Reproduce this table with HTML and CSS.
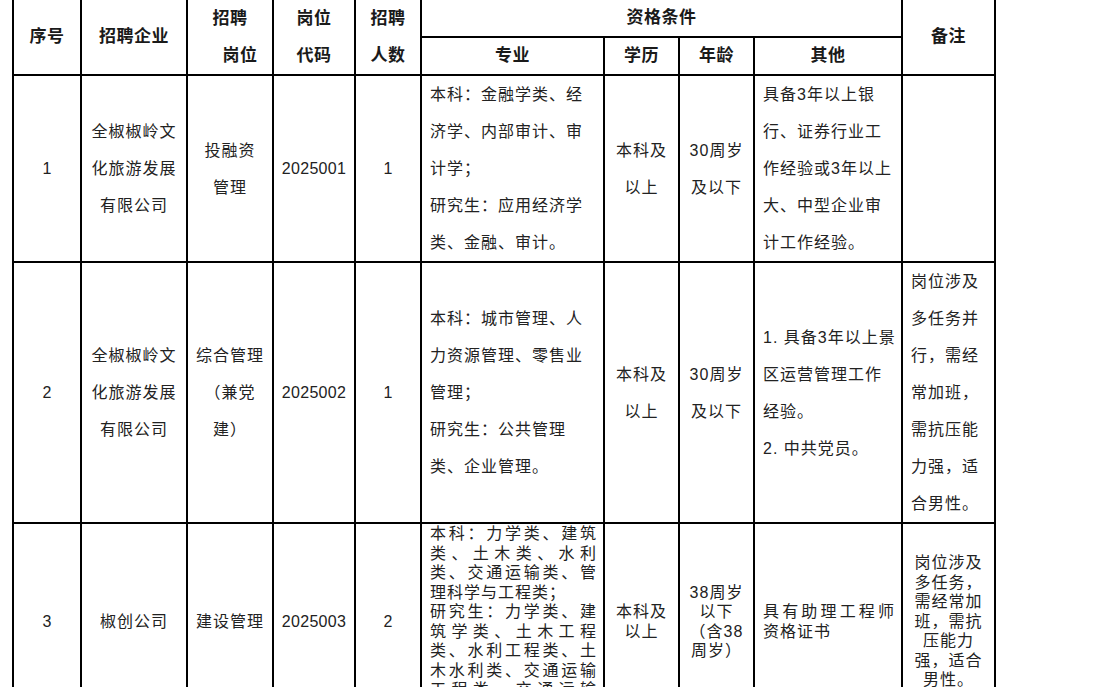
FILE: index.html
```html
<!DOCTYPE html>
<html lang="zh-CN">
<head>
<meta charset="utf-8">
<title>招聘岗位表</title>
<link rel="stylesheet" href="styles.css">
</head>
<body>
<table class="sheet">
  <colgroup>
    <col class="c-no">
    <col class="c-co">
    <col class="c-job">
    <col class="c-code">
    <col class="c-num">
    <col class="c-major">
    <col class="c-edu">
    <col class="c-age">
    <col class="c-other">
    <col class="c-note">
  </colgroup>
  <thead>
    <tr class="h1">
      <th rowspan="2">序号</th>
      <th rowspan="2">招聘企业</th>
      <th rowspan="2" class="two">招聘<br><span class="shift">岗位</span></th>
      <th rowspan="2" class="two">岗位<br>代码</th>
      <th rowspan="2" class="two">招聘<br>人数</th>
      <th colspan="4">资格条件</th>
      <th rowspan="2">备注</th>
    </tr>
    <tr class="h2">
      <th>专业</th>
      <th>学历</th>
      <th>年龄</th>
      <th>其他</th>
    </tr>
  </thead>
  <tbody>
    <tr>
      <td class="code">1</td>
      <td>全椒椒岭文<br>化旅游发展<br>有限公司</td>
      <td>投融资<br>管理</td>
      <td class="code">2025001</td>
      <td class="code">1</td>
      <td class="left">本科：金融学类、经<br>济学、内部审计、审<br>计学；<br>研究生：应用经济学<br>类、金融、审计。</td>
      <td>本科及<br>以上</td>
      <td>30周岁<br>及以下</td>
      <td class="left">具备3年以上银<br>行、证券行业工<br>作经验或3年以上<br>大、中型企业审<br>计工作经验。</td>
      <td></td>
    </tr>
    <tr>
      <td class="code">2</td>
      <td>全椒椒岭文<br>化旅游发展<br>有限公司</td>
      <td>综合管理<br>（兼党<br>建）</td>
      <td class="code">2025002</td>
      <td class="code">1</td>
      <td class="left">本科：城市管理、人<br>力资源管理、零售业<br>管理；<br>研究生：公共管理<br>类、企业管理。</td>
      <td>本科及<br>以上</td>
      <td>30周岁<br>及以下</td>
      <td class="left">1. 具备3年以上景<br>区运营管理工作<br>经验。<br>2. 中共党员。</td>
      <td class="left">岗位涉及<br>多任务并<br>行，需经<br>常加班，<br>需抗压能<br>力强，适<br>合男性。</td>
    </tr>
    <tr class="dense">
      <td class="code">3</td>
      <td>椒创公司</td>
      <td>建设管理</td>
      <td class="code">2025003</td>
      <td class="code">2</td>
      <td class="just">本科：力学类、建筑类、土木类、水利类、交通运输类、管理科学与工程类；<br>研究生：力学类、建筑学类、土木工程类、水利工程类、土木水利类、交通运输工程类、交通运输类。</td>
      <td>本科及<br>以上</td>
      <td>38周岁<br>以下<br>（含38<br>周岁）</td>
      <td class="just">具有助理工程师资格证书</td>
      <td>岗位涉及<br>多任务，<br>需经常加<br>班，需抗<br>压能力<br>强，适合<br>男性。</td>
    </tr>
  </tbody>
</table>
</body>
</html>
```

FILE: styles.css
```css
html, body {
  margin: 0;
  padding: 0;
  background: #ffffff;
}

body {
  font-family: "Liberation Sans", "Noto Sans CJK SC", sans-serif;
  color: #222222;
}

.sheet {
  border-collapse: collapse;
  table-layout: fixed;
  width: 984px;
  margin-left: 12px;
}

.c-no { width: 68px; }
.c-co { width: 106px; }
.c-job { width: 86px; }
.c-code { width: 82px; }
.c-num { width: 66px; }
.c-major { width: 183px; }
.c-edu { width: 75px; }
.c-age { width: 75px; }
.c-other { width: 148px; }
.c-note { width: 93px; }

.sheet th,
.sheet td {
  border: 2px solid #000000;
  padding: 0 3px;
  text-align: center;
  vertical-align: middle;
}

.sheet thead tr.h1 th {
  border-top: none;
}

.sheet th {
  font-size: 17px;
  font-weight: 700;
  letter-spacing: 0.5px;
  line-height: 34px;
  color: #1a1a1a;
  white-space: nowrap;
}

.sheet th.two {
  line-height: 37px;
}

.h1 { height: 37px; }
.h2 { height: 38px; }

.shift {
  display: inline-block;
  padding-left: 20px;
}

.sheet td {
  font-size: 16px;
  letter-spacing: 1px;
  line-height: 37px;
  white-space: nowrap;
}

.sheet td.code {
  letter-spacing: 0.3px;
}

.sheet td.left {
  text-align: left;
  padding-left: 8px;
}

.dense td {
  line-height: 19.5px;
}

.sheet td.just {
  text-align: justify;
  white-space: normal;
  padding: 0 6px 0 8px;
}
```
